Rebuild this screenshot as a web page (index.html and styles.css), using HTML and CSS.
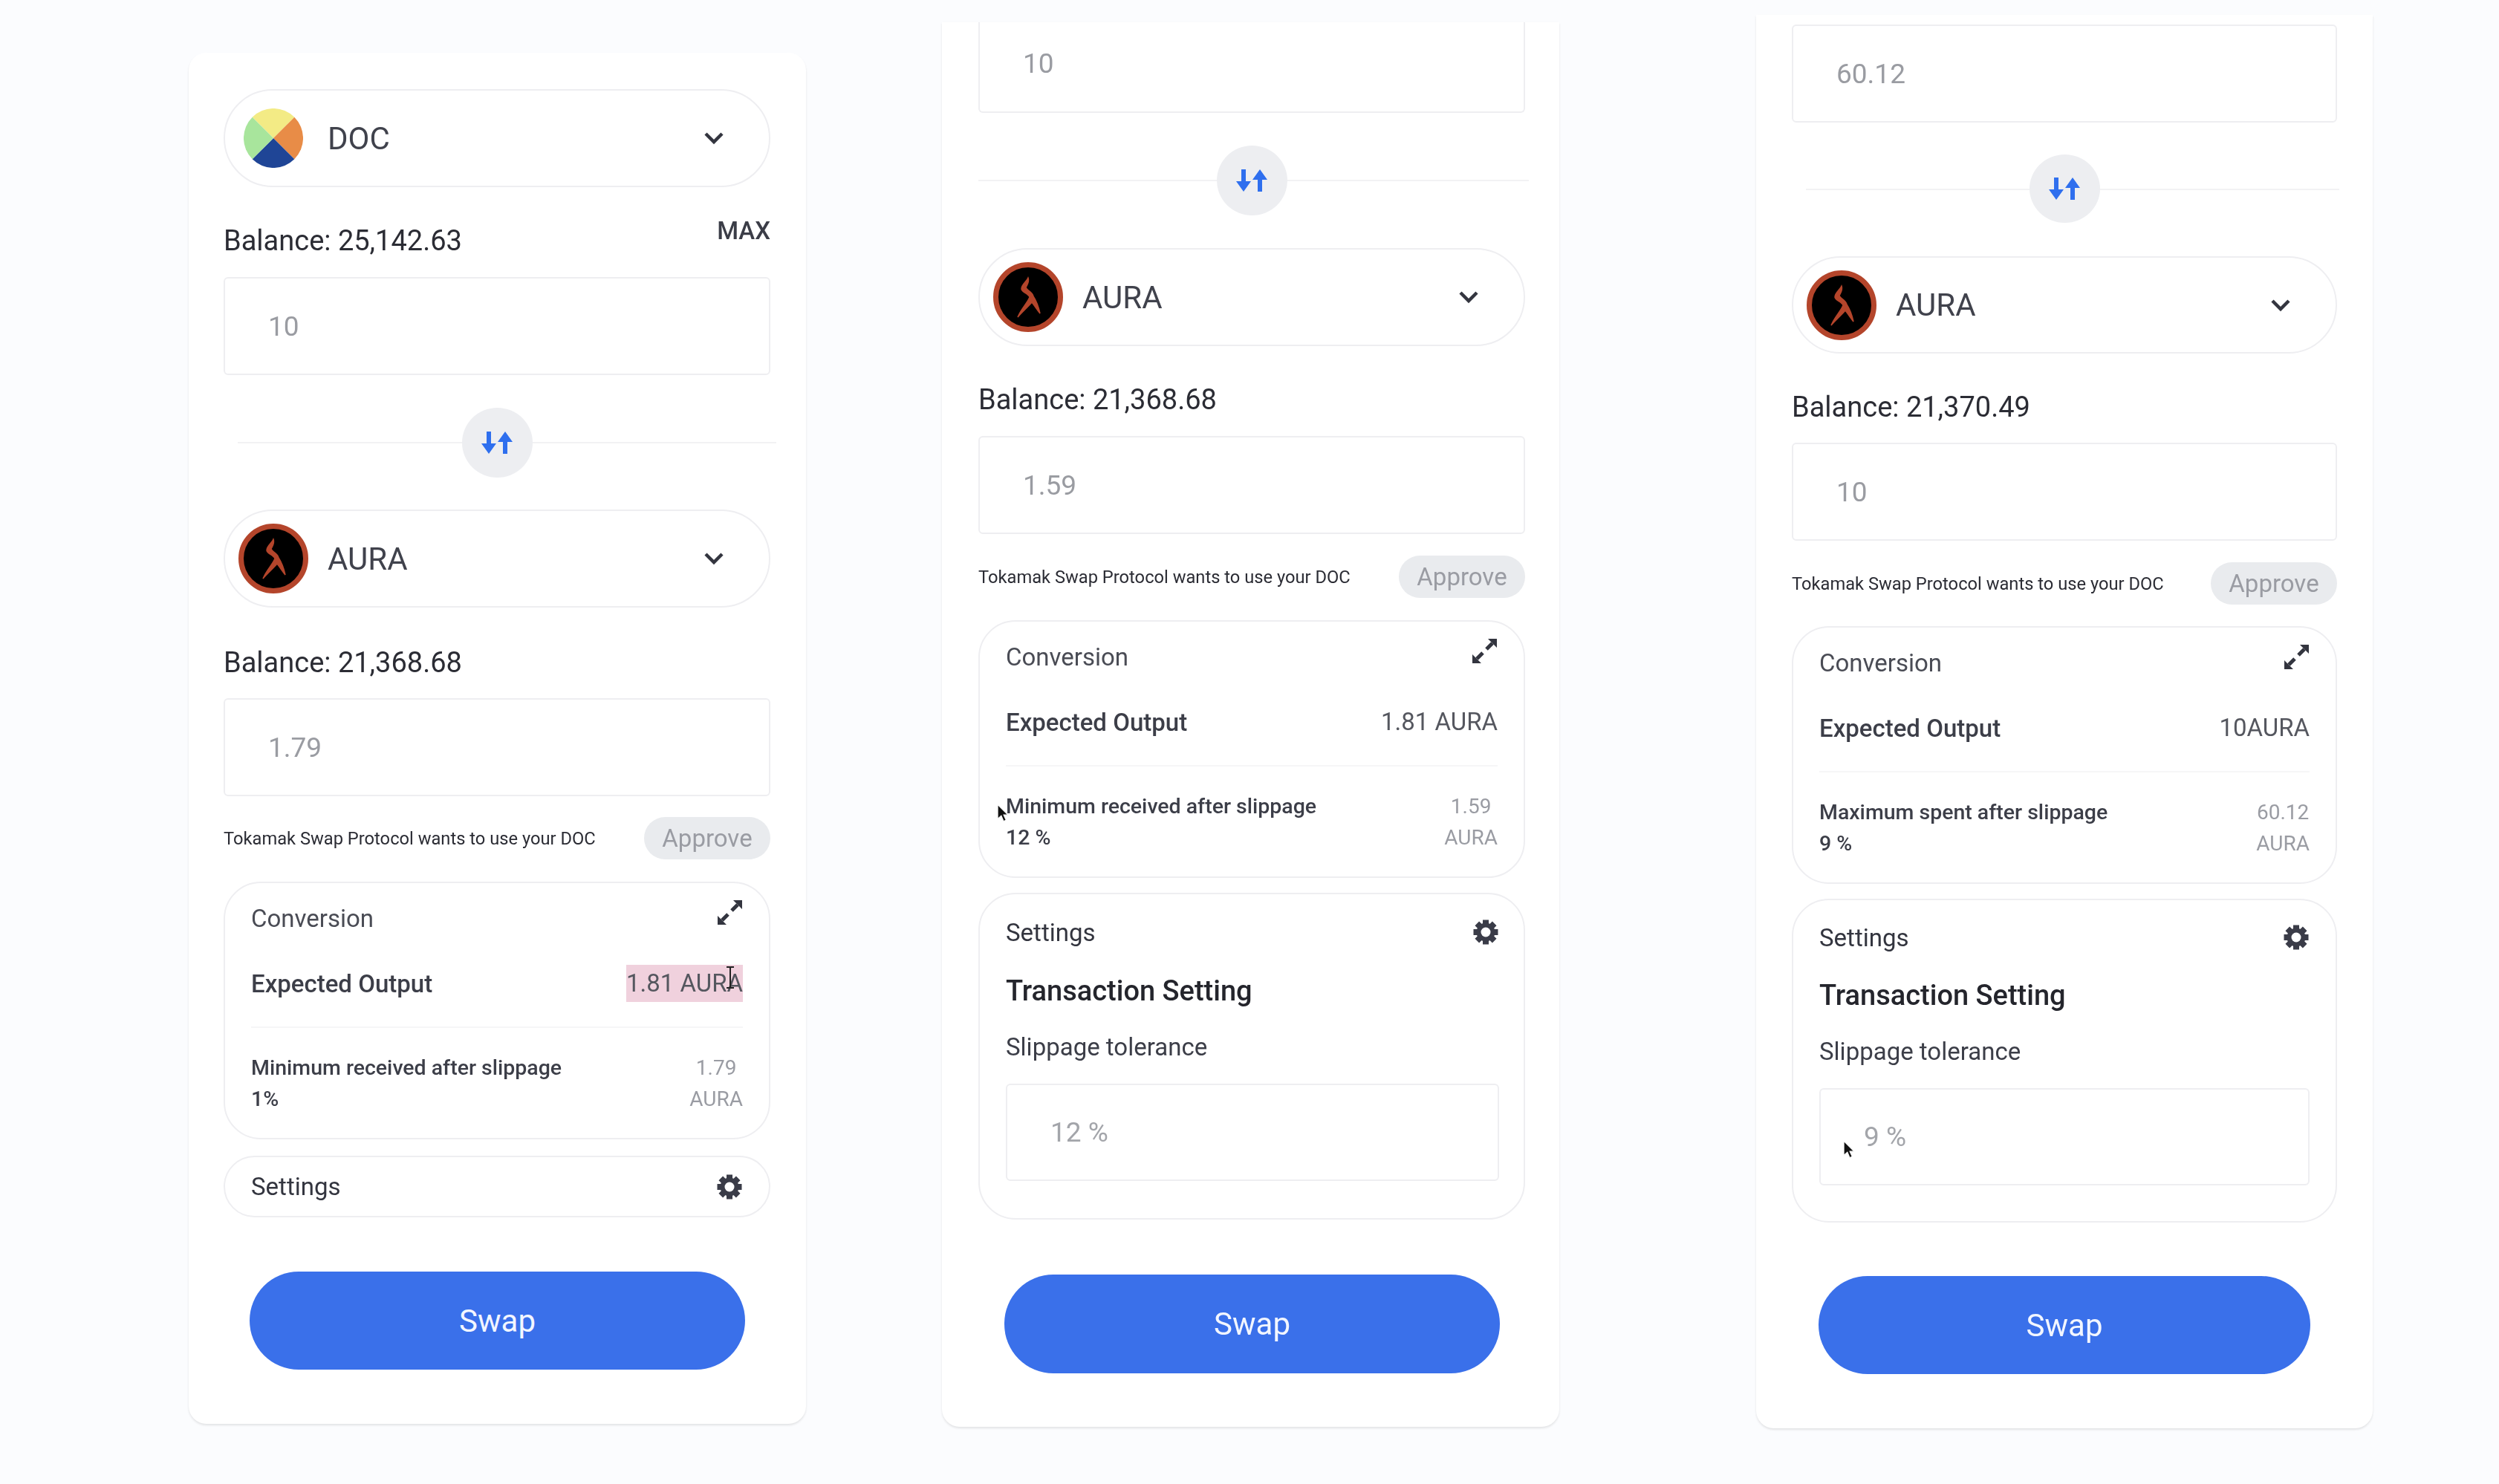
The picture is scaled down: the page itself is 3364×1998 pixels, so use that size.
FILE: index.html
```html
<!DOCTYPE html>
<html lang="en">
<head>
    <meta charset="UTF-8">
    <meta name="viewport" content="width=device-width, initial-scale=1.0">
    <title>Tokamak Swap</title>
    <link rel="stylesheet" href="styles.css">
</head>
<body>
    <svg class="icon-defs" xmlns="http://www.w3.org/2000/svg">
        <symbol id="icon-doc" viewBox="0 0 80 80">
            <path d="M40 40 L11.7 11.7 A40 40 0 0 1 68.3 11.7Z" fill="#f3eb85"/>
            <path d="M40 40 L68.3 11.7 A40 40 0 0 1 68.3 68.3Z" fill="#e88c47"/>
            <path d="M40 40 L68.3 68.3 A40 40 0 0 1 11.7 68.3Z" fill="#1f4596"/>
            <path d="M40 40 L11.7 68.3 A40 40 0 0 1 11.7 11.7Z" fill="#a8e59c"/>
        </symbol>
        <symbol id="icon-aura" viewBox="0 0 94 94">
            <circle cx="47" cy="47" r="43.5" fill="#000" stroke="#b4452b" stroke-width="7"/>
            <path d="M47 21 C45 26 38 30 38 36 C39 41 47 42 49 47 C46 55 38 62 33 74 C40 66 47 60 52 54 C56 59 59 64 63 69 C61 60 58 52 54 46 C53 40 45 38 44 34 C46 30 49 26 47 21Z" fill="#b4452b" stroke="#b4452b" stroke-width="1.5"/>
        </symbol>
        <symbol id="icon-chevron" viewBox="0 0 28 18">
            <path d="M3 3 L14 14 L25 3" fill="none" stroke="#33353f" stroke-width="4.5"/>
        </symbol>
        <symbol id="icon-swap" viewBox="0 0 42 32">
            <path d="M7 1 H13 V17 H20 L10 31 L0 17 H7Z" fill="#2f6fee"/>
            <path d="M29 31 H35 V15 H42 L32 1 L22 15 H29Z" fill="#2f6fee"/>
        </symbol>
        <symbol id="icon-expand" viewBox="0 0 35 35">
            <path d="M22 1 H34 V13Z M1 22 V34 H13Z" fill="#33353f"/>
            <path d="M28 7 L20 15 M7 28 L15 20" stroke="#33353f" stroke-width="5"/>
        </symbol>
        <symbol id="icon-gear" viewBox="0 0 36 36">
            <path d="M18 1.5 V34.5 M1.5 18 H34.5 M6.3 6.3 L29.7 29.7 M29.7 6.3 L6.3 29.7" stroke="#3a3c48" stroke-width="8"/>
            <circle cx="18" cy="18" r="12.5" fill="#3a3c48"/>
            <circle cx="18" cy="18" r="6.5" fill="#fff"/>
        </symbol>
        <symbol id="icon-pointer" viewBox="0 0 16 24">
            <path d="M1 1 V19 L5.5 15 L8.5 22 L11.5 20.5 L8.5 14 H14Z" fill="#111" stroke="#fff" stroke-width="1"/>
        </symbol>
        <symbol id="icon-ibeam" viewBox="0 0 12 30">
            <path d="M1 1 H5 L6 2 L7 1 H11 M6 2 V28 M1 29 H5 L6 28 L7 29 H11" fill="none" stroke="#222" stroke-width="2"/>
        </symbol>
    </svg>

    <div class="card card-first">
        <div class="token-select">
            <span class="token-icon"><svg class="logo-doc"><use href="#icon-doc"/></svg></span>
            <span class="token-name">DOC</span>
            <svg class="chevron"><use href="#icon-chevron"/></svg>
        </div>
        <div class="balance-row">
            <span>Balance: 25,142.63</span>
            <span class="max">MAX</span>
        </div>
        <div class="amount">10</div>
        <div class="swap-row">
            <div class="swap-btn"><svg class="swap-icon"><use href="#icon-swap"/></svg></div>
        </div>
        <div class="token-select">
            <span class="token-icon"><svg class="logo-aura"><use href="#icon-aura"/></svg></span>
            <span class="token-name">AURA</span>
            <svg class="chevron"><use href="#icon-chevron"/></svg>
        </div>
        <div class="balance-row balance-second">
            <span>Balance: 21,368.68</span>
        </div>
        <div class="amount">1.79</div>
        <div class="approve-row">
            <span>Tokamak Swap Protocol wants to use your DOC</span>
            <span class="approve">Approve</span>
        </div>
        <div class="panel">
            <div class="panel-head">
                <span class="panel-title">Conversion</span>
                <svg class="expand"><use href="#icon-expand"/></svg>
            </div>
            <div class="output-row">
                <span class="output-label">Expected Output</span>
                <span class="output-value selected">1.81 AURA<svg class="ibeam"><use href="#icon-ibeam"/></svg></span>
            </div>
            <div class="slippage-row">
                <div class="slippage-label">Minimum received after slippage<br>1%</div>
                <div class="slippage-value">1.79<br>AURA</div>
            </div>
        </div>
        <div class="settings-bar">
            <span class="settings-title">Settings</span>
            <svg class="gear"><use href="#icon-gear"/></svg>
        </div>
        <button class="swap-submit">Swap</button>
    </div>

    <div class="card card-mid">
        <div class="amount amount-clipped">10</div>
        <div class="swap-row">
            <div class="swap-btn"><svg class="swap-icon"><use href="#icon-swap"/></svg></div>
        </div>
        <div class="token-select">
            <span class="token-icon"><svg class="logo-aura"><use href="#icon-aura"/></svg></span>
            <span class="token-name">AURA</span>
            <svg class="chevron"><use href="#icon-chevron"/></svg>
        </div>
        <div class="balance-row">
            <span>Balance: 21,368.68</span>
        </div>
        <div class="amount">1.59</div>
        <div class="approve-row">
            <span>Tokamak Swap Protocol wants to use your DOC</span>
            <span class="approve">Approve</span>
        </div>
        <div class="panel">
            <div class="panel-head">
                <span class="panel-title">Conversion</span>
                <svg class="expand"><use href="#icon-expand"/></svg>
            </div>
            <div class="output-row">
                <span class="output-label">Expected Output</span>
                <span class="output-value">1.81 AURA</span>
            </div>
            <div class="slippage-row">
                <div class="slippage-label">Minimum received after slippage<br>12 %</div>
                <div class="slippage-value">1.59<br>AURA</div>
            </div>
            <svg class="pointer pointer-conversion"><use href="#icon-pointer"/></svg>
        </div>
        <div class="settings-panel">
            <div class="panel-head">
                <span class="settings-title">Settings</span>
                <svg class="gear"><use href="#icon-gear"/></svg>
            </div>
            <div class="transaction-title">Transaction Setting</div>
            <div class="tolerance-label">Slippage tolerance</div>
            <div class="tolerance-input">12 %</div>
        </div>
        <button class="swap-submit">Swap</button>
    </div>

    <div class="card card-last">
        <div class="amount">60.12</div>
        <div class="swap-row">
            <div class="swap-btn"><svg class="swap-icon"><use href="#icon-swap"/></svg></div>
        </div>
        <div class="token-select">
            <span class="token-icon"><svg class="logo-aura"><use href="#icon-aura"/></svg></span>
            <span class="token-name">AURA</span>
            <svg class="chevron"><use href="#icon-chevron"/></svg>
        </div>
        <div class="balance-row">
            <span>Balance: 21,370.49</span>
        </div>
        <div class="amount">10</div>
        <div class="approve-row">
            <span>Tokamak Swap Protocol wants to use your DOC</span>
            <span class="approve">Approve</span>
        </div>
        <div class="panel">
            <div class="panel-head">
                <span class="panel-title">Conversion</span>
                <svg class="expand"><use href="#icon-expand"/></svg>
            </div>
            <div class="output-row">
                <span class="output-label">Expected Output</span>
                <span class="output-value">10AURA</span>
            </div>
            <div class="slippage-row">
                <div class="slippage-label">Maximum spent after slippage<br>9 %</div>
                <div class="slippage-value">60.12<br>AURA</div>
            </div>
        </div>
        <div class="settings-panel">
            <div class="panel-head">
                <span class="settings-title">Settings</span>
                <svg class="gear"><use href="#icon-gear"/></svg>
            </div>
            <div class="transaction-title">Transaction Setting</div>
            <div class="tolerance-label">Slippage tolerance</div>
            <div class="tolerance-input">9 %<svg class="pointer pointer-tolerance"><use href="#icon-pointer"/></svg></div>
        </div>
        <button class="swap-submit">Swap</button>
    </div>
</body>
</html>
```

FILE: styles.css
```css
body {
    font-family: 'Roboto', 'Liberation Sans', sans-serif;
    background-color: #fbfcfe;
    color: #2b2c34;
    margin: 0;
    height: 1998px;
    overflow: hidden;
    display: flex;
    align-items: flex-start;
}

.icon-defs {
    display: none;
}

/* cards */
.card {
    box-sizing: border-box;
    width: 831px;
    background-color: #fff;
    border-radius: 0 0 24px 24px;
    box-shadow: 0 2px 3px rgba(0, 0, 0, 0.1);
    display: flex;
    flex-direction: column;
    flex-shrink: 0;
    filter: blur(0.7px);
}

.card-first {
    margin: 71px 0 0 254px;
    padding: 49px 48px 73px 47px;
    border-radius: 24px;
}

.card-mid {
    margin: 30px 0 0 183px;
    padding: 0 46px 72px 49px;
}

.card-last {
    width: 830px;
    margin: 20px 0 0 265px;
    padding: 13px 48px 73px 48px;
}

/* token select */
.token-select {
    box-sizing: border-box;
    height: 132px;
    border: 2px solid #eeeef1;
    border-radius: 66px;
    display: flex;
    align-items: center;
    padding-left: 18px;
    padding-right: 60px;
}

.token-icon {
    width: 94px;
    height: 94px;
    display: flex;
    align-items: center;
    justify-content: center;
    margin-right: 26px;
}

.logo-doc {
    width: 80px;
    height: 80px;
}

.logo-aura {
    width: 94px;
    height: 94px;
}

.token-name {
    font-size: 42px;
    color: #40424c;
    flex: 1;
}

.chevron {
    width: 28px;
    height: 18px;
}

/* balance */
.balance-row {
    height: 40px;
    margin: 52px 0 29px;
    display: flex;
    justify-content: space-between;
    font-size: 38px;
    line-height: 40px;
}

.balance-second {
    margin: 54px 0 28px;
}

.max {
    font-size: 33px;
    font-weight: 500;
    color: #3b3d47;
    margin-top: -13px;
}

/* amount inputs */
.amount {
    box-sizing: border-box;
    height: 132px;
    border: 2px solid #eeeef1;
    border-radius: 6px;
    padding-left: 58px;
    display: flex;
    align-items: center;
    font-size: 37px;
    color: #9a9ca2;
}

.amount-clipped {
    height: 122px;
    border-top: none;
    border-radius: 0 0 6px 6px;
    padding-bottom: 10px;
}

/* swap direction */
.swap-row {
    position: relative;
    height: 94px;
    margin: 44px 0 45px;
    display: flex;
    justify-content: center;
}

.swap-row::before {
    content: '';
    position: absolute;
    left: 19px;
    right: -8px;
    top: 46px;
    height: 2px;
    background-color: #f2f2f4;
}

.swap-btn {
    position: relative;
    width: 95px;
    height: 94px;
    border-radius: 50%;
    background-color: #edeef1;
    display: flex;
    align-items: center;
    justify-content: center;
}

.swap-icon {
    width: 42px;
    height: 32px;
}

.card-first .swap-row {
    margin-bottom: 43px;
}

.card-mid .swap-row {
    height: 95px;
    margin: 44px 0 43px;
}

.card-mid .swap-row::before {
    left: 0;
    right: -5px;
}

.card-last .swap-row {
    height: 92px;
    margin: 43px 0 45px;
}

.card-last .swap-row::before {
    right: -3px;
}

.card-last .swap-btn {
    height: 92px;
}

.card-last .token-select {
    height: 131px;
}

.card-last .balance-row {
    margin-bottom: 28px;
}

/* approve */
.approve-row {
    height: 57px;
    margin: 27px 0 30px;
    display: flex;
    align-items: center;
    justify-content: space-between;
    font-size: 23.7px;
    color: #2b2c34;
}

.card-first .balance-second + .amount + .approve-row {
    margin-top: 28px;
}

.approve {
    box-sizing: border-box;
    width: 170px;
    height: 57px;
    border-radius: 29px;
    background-color: #e9ebee;
    color: #9a9ca3;
    font-size: 33px;
    display: flex;
    align-items: center;
    justify-content: center;
}

.card-mid .approve-row {
    margin: 29px 0 30px;
}

.card-last .approve-row {
    margin: 29px 0;
}

/* conversion panel */
.panel {
    position: relative;
    box-sizing: border-box;
    height: 347px;
    border: 2px solid #eeeef1;
    border-radius: 50px;
    padding: 0 35px;
    display: flex;
    flex-direction: column;
}

.panel-head {
    height: 94px;
    display: flex;
    align-items: center;
    justify-content: space-between;
}

.panel-title {
    font-size: 33px;
    color: #4a4c55;
}

.expand {
    width: 35px;
    height: 35px;
    margin-top: -16px;
}

.output-row {
    height: 76px;
    margin-top: 3px;
    padding-bottom: 20px;
    display: flex;
    align-items: center;
    justify-content: space-between;
    border-bottom: 2px solid #f6f6f7;
}

.output-label {
    font-size: 33px;
    font-weight: 500;
    color: #3c3e48;
}

.output-value {
    position: relative;
    font-size: 33px;
    color: #55575f;
    line-height: 50px;
}

.selected {
    background-color: #f0d1dd;
}

.ibeam {
    position: absolute;
    right: 11px;
    top: 2px;
    width: 12px;
    height: 30px;
}

.slippage-row {
    display: flex;
    justify-content: space-between;
    margin-top: 33px;
    line-height: 42px;
}

.slippage-label {
    font-size: 28.5px;
    font-weight: 500;
    color: #3c3e48;
}

.slippage-value {
    text-align: center;
    font-size: 28px;
    color: #9a9ca3;
}

.pointer {
    position: absolute;
    width: 17px;
    height: 26px;
}

.pointer-conversion {
    left: 23px;
    top: 245px;
}

.pointer-tolerance {
    left: 30px;
    top: 68px;
}

/* settings */
.settings-bar {
    box-sizing: border-box;
    height: 83px;
    margin-top: 22px;
    border: 2px solid #eeeef1;
    border-radius: 42px;
    padding: 0 35px;
    display: flex;
    align-items: center;
    justify-content: space-between;
}

.settings-title {
    font-size: 33px;
    color: #33353f;
}

.gear {
    width: 36px;
    height: 36px;
}

.settings-panel {
    box-sizing: border-box;
    height: 440px;
    margin-top: 20px;
    border: 2px solid #eeeef1;
    border-radius: 50px;
    padding: 0 33px 0 35px;
    display: flex;
    flex-direction: column;
}

.settings-panel .panel-head {
    height: 102px;
}

.transaction-title {
    font-size: 38px;
    font-weight: 500;
    color: #24252c;
    line-height: 50px;
    margin-top: 3px;
}

.tolerance-label {
    font-size: 33px;
    color: #3c3e48;
    line-height: 44px;
    margin-top: 29px;
}

.tolerance-input {
    position: relative;
    box-sizing: border-box;
    height: 131px;
    margin-top: 27px;
    border: 2px solid #eeeef1;
    border-radius: 6px;
    padding-left: 58px;
    display: flex;
    align-items: center;
    font-size: 37px;
    color: #a3a5aa;
}

.card-last .settings-panel {
    height: 436px;
    margin-top: 20px;
    padding-right: 35px;
}

.card-last .settings-panel .panel-head {
    height: 100px;
}

/* swap button */
.swap-submit {
    height: 132px;
    margin: 73px 34px 0 35px;
    border: none;
    border-radius: 66px;
    background-color: #3a70ea;
    color: #f2f6ff;
    font-family: inherit;
    font-size: 42px;
}

.card-mid .swap-submit {
    height: 133px;
    margin-top: 74px;
}

.card-last .swap-submit {
    margin: 72px 36px 0;
}
```
